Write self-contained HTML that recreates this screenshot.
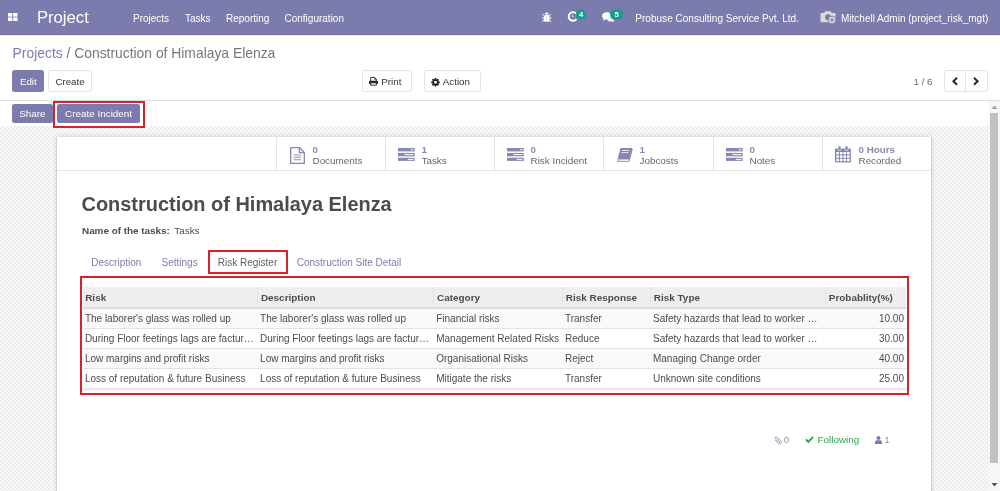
<!DOCTYPE html>
<html><head><meta charset="utf-8">
<style>
*{box-sizing:border-box;margin:0;padding:0}
html{background:#fff}body{will-change:transform;}html,body{-webkit-font-smoothing:antialiased;width:1000px;height:491px;overflow:hidden;background:#fff;font-family:"Liberation Sans",sans-serif;color:#4c4c4c}
.a{position:absolute;white-space:nowrap}
svg.a{overflow:visible}
#nav{position:absolute;left:0;top:0;width:1000px;height:35px;background:#7c7bad;color:#fff;box-shadow:inset 0 -1px 0 #6d6c98,0 1px 0 #ebe9f5}
#nav .a{color:#fff}
.nt{font-size:10px;line-height:12px;top:12.7px}
.btn{position:absolute;border-radius:2.5px;font-size:9.75px;text-align:center;line-height:23px;height:22.3px}
.bp{background:#7c7bad;color:#fff}
.bd{background:#fff;border:1px solid #e3e3e3;color:#333;line-height:21px}
#texture{position:absolute;left:0;top:126px;width:989px;height:365px;background-color:#f8f8f8;
 background-image:linear-gradient(45deg,#ededed 25%,transparent 25%,transparent 75%,#ededed 75%),linear-gradient(45deg,#ededed 25%,transparent 25%,transparent 75%,#ededed 75%);
 background-size:4px 4px;background-position:0 0,2px 2px}
#sheet{position:absolute;left:57px;top:137px;width:874px;height:360px;background:#fff;box-shadow:-1px 0 0 #d2d2d2,1px 0 0 #d2d2d2,0 0 5px rgba(0,0,0,.18)}
.sb{position:absolute;top:137px;height:33.5px;width:109px;border-left:1px solid #e4e4e4}
.sb .n{position:absolute;left:35.5px;top:7.5px;font-size:9.8px;font-weight:bold;color:#8a89b0;line-height:10px}
.sb .l{position:absolute;left:35.5px;top:18.2px;font-size:9.9px;color:#666;line-height:12px}
.sb svg{position:absolute}
table{position:absolute;left:82.5px;top:287px;width:823.5px;border-collapse:collapse;font-size:9.95px;table-layout:fixed}
th{background:#eee;font-weight:bold;text-align:left;height:21px;padding:0 2px 0 2.7px;border-left:1px solid #e2e2e2;border-bottom:2px solid #dcdcdc;color:#4c4c4c}
td{height:20px;padding:0 2px 0 2.4px;font-size:10px;border-top:1px solid #e2e2e2;white-space:nowrap;overflow:hidden;color:#4c4c4c}
tr.odd td{background:#f9f9f9}
.red{position:absolute;border:2px solid #d5232b;z-index:5}
.tab{font-size:10px;line-height:12px;top:256.8px;color:#7c7bad}
.ch{font-size:9.9px;line-height:12px;top:434.4px}
</style></head><body>
<div id="nav">
  <svg class="a" style="left:7.7px;top:13px" width="9.5" height="8" viewBox="0 0 9.5 8"><rect x="0" y="0" width="4.3" height="3.6" fill="#fff"/><rect x="5.2" y="0" width="4.3" height="3.6" fill="#fff"/><rect x="0" y="4.4" width="4.3" height="3.6" fill="#fff"/><rect x="5.2" y="4.4" width="4.3" height="3.6" fill="#fff"/></svg>
  <div class="a" style="left:36.9px;top:8.4px;font-size:16.7px;line-height:20px">Project</div>
  <div class="a nt" style="left:133px">Projects</div>
  <div class="a nt" style="left:185px">Tasks</div>
  <div class="a nt" style="left:226px">Reporting</div>
  <div class="a nt" style="left:284.5px">Configuration</div>
  <!-- bug -->
  <svg class="a" style="left:542.4px;top:11.9px" width="9.5" height="10" viewBox="0 0 9.5 10"><path d="M2.6 2.6 Q2.9 0.4 4.75 0.4 Q6.6 0.4 6.9 2.6 Z" fill="#fff"/><rect x="1.9" y="2.9" width="5.7" height="6.9" rx="1.6" fill="#fff"/><path d="M0.3 2.2 L2.2 3.6 M9.2 2.2 L7.3 3.6 M0 6 H2.2 M9.5 6 H7.3 M0.3 9.6 L2.2 8.2 M9.2 9.6 L7.3 8.2" stroke="#fff" stroke-width="1"/><rect x="4.5" y="3.8" width="0.5" height="5.4" fill="#b9b8d6"/></svg>
  <!-- clock -->
  <svg class="a" style="left:566.8px;top:11.2px" width="10.5" height="10.5" viewBox="0 0 10.5 10.5"><path d="M9.2 2.6 A4.3 4.3 0 1 0 9.4 8.1" fill="none" stroke="#fff" stroke-width="1.9"/><path d="M5.3 3.2 V5.5 H7" fill="none" stroke="#d8d8ea" stroke-width="0.8"/></svg>
  <div class="a" style="left:576px;top:8.6px;width:10.3px;height:11.3px;border-radius:5.5px;background:#1e9b8a;color:#e8fff8 !important;font-size:7.6px;font-weight:bold;line-height:11.3px;text-align:center">4</div>
  <!-- chat -->
  <svg class="a" style="left:601.8px;top:11.5px" width="13" height="10" viewBox="0 0 13 10"><ellipse cx="5" cy="3.9" rx="5" ry="3.6" fill="#fff"/><path d="M1.8 6.3 L0.8 8.6 L4.2 7 Z" fill="#fff"/><ellipse cx="9" cy="7.2" rx="3.6" ry="2.3" fill="#f3f0fa"/><path d="M10.4 9 L12.2 10 L11.3 8.3 Z" fill="#f3f0fa"/></svg>
  <div class="a" style="left:610.3px;top:8.6px;width:12.5px;height:11.6px;border-radius:6px;background:#1e9b8a;color:#e8fff8 !important;font-size:7.6px;font-weight:bold;line-height:11.6px;text-align:center">5</div>
  <div class="a nt" style="left:635.3px;font-size:10.05px">Probuse Consulting Service Pvt. Ltd.</div>
  <!-- camera -->
  <svg class="a" style="left:819.8px;top:11px" width="16.5" height="13" viewBox="0 0 16.5 13"><path d="M0.5 3 Q0.5 2 1.5 2 H4 L5.2 0.3 H10.6 L11.8 2 H14.6 Q15.6 2 15.6 3 V10.5 Q15.6 11.3 14.6 11.3 H1.5 Q0.5 11.3 0.5 10.5 Z" fill="#d9d9de"/><circle cx="8" cy="6.3" r="3" fill="#7d7c9e"/><circle cx="12" cy="9" r="3.9" fill="#d9d9de" stroke="#7c7bad" stroke-width="0.9"/><path d="M12 6.9 V11.1 M9.9 9 H14.1" stroke="#7d7c9e" stroke-width="1.1"/></svg>
  <div class="a nt" style="left:841px">Mitchell Admin (project_risk_mgt)</div>
</div>
<div class="a" style="left:12.6px;top:45px;font-size:13.87px;line-height:16px;color:#777"><span style="color:#7c7bad">Projects</span> / Construction of Himalaya Elenza</div>
<div class="btn bp" style="left:12.2px;top:70.2px;width:32.3px">Edit</div>
<div class="btn bd" style="left:47.7px;top:70.2px;width:44.7px">Create</div>
<div class="btn bd" style="left:361.5px;top:70.2px;width:50px"></div>
<svg class="a" style="left:369px;top:77.2px" width="9" height="8.6" viewBox="0 0 9 8.6"><path d="M1.7 4 V0.45 H5.6 L7.3 2.1 V4" fill="none" stroke="#222" stroke-width="0.9"/><path d="M5.4 0.45 V2.3 H7.3" fill="none" stroke="#222" stroke-width="0.7"/><rect x="0" y="3.7" width="9" height="3.3" rx="0.9" fill="#222"/><rect x="1.7" y="5.8" width="5.6" height="2.35" fill="#fff" stroke="#222" stroke-width="0.9"/></svg>
<div class="a" style="left:381.3px;top:75.5px;font-size:9.75px;line-height:12px;color:#333">Print</div>
<div class="btn bd" style="left:423.5px;top:70.2px;width:57px"></div>
<svg class="a" style="left:431px;top:77.5px" width="9" height="8.6" viewBox="-4.5 -4.3 9 8.6"><g fill="#222"><circle r="3.1"/><rect x="-0.9" y="-4.3" width="1.8" height="8.6" rx="0.3"/><rect x="-0.9" y="-4.3" width="1.8" height="8.6" rx="0.3" transform="rotate(45)"/><rect x="-0.9" y="-4.3" width="1.8" height="8.6" rx="0.3" transform="rotate(90)"/><rect x="-0.9" y="-4.3" width="1.8" height="8.6" rx="0.3" transform="rotate(135)"/></g><circle r="1.5" fill="#fff"/></svg>
<div class="a" style="left:442.8px;top:75.5px;font-size:9.75px;line-height:12px;color:#333">Action</div>
<div class="a" style="left:913.5px;top:75.5px;font-size:9.75px;line-height:12px;color:#666">1 / 6</div>
<div class="btn bd" style="left:943.5px;top:70.2px;width:44px"></div>
<div class="a" style="left:965.2px;top:71px;width:1px;height:21px;background:#e3e3e3"></div>
<svg class="a" style="left:952px;top:77px" width="6" height="8.6" viewBox="0 0 6 8.6"><path d="M5 0.8 L1.4 4.3 L5 7.8" fill="none" stroke="#222" stroke-width="1.9"/></svg>
<svg class="a" style="left:973.3px;top:77px" width="6" height="8.6" viewBox="0 0 6 8.6"><path d="M1 0.8 L4.6 4.3 L1 7.8" fill="none" stroke="#222" stroke-width="1.9"/></svg>
<div class="a" style="left:0;top:100px;width:1000px;height:1px;background:#dedede;z-index:3"></div>
<div class="btn bp" style="left:12.2px;top:104.3px;width:40.5px;height:18.5px;line-height:20px;font-size:9.9px">Share</div>
<div class="btn bp" style="left:57.2px;top:104.3px;width:82.8px;height:18.5px;line-height:20px;font-size:9.9px">Create Incident</div>
<div class="red" style="left:53px;top:101px;width:91.5px;height:27px"></div>
<div id="texture"></div>
<div id="sheet"></div>
<div class="a" style="left:57px;top:170px;width:874px;height:1px;background:#e4e4e4"></div>
<div class="sb" style="left:276px"><svg style="left:12.5px;top:9.5px" width="15" height="17" viewBox="0 0 15 17"><path d="M0.7 0.7 H9.5 L14.3 5.5 V16.3 H0.7 Z" fill="none" stroke="#8786b5" stroke-width="1.3"/><path d="M9.3 0.7 V5.7 H14.3" fill="none" stroke="#8786b5" stroke-width="1.3"/><path d="M3.7 8 H11 M3.7 10.3 H11 M3.7 12.7 H11" stroke="#8786b5" stroke-width="0.9"/></svg><div class="n">0</div><div class="l">Documents</div></div>
<div class="sb" style="left:385px"><svg style="left:11.7px;top:10.6px" width="17" height="13" viewBox="0 0 17 13"><rect x="0" y="0" width="16.7" height="3.4" fill="#8786b5"/><rect x="0" y="4.9" width="16.7" height="3.4" fill="#8786b5"/><rect x="0" y="9.7" width="16.7" height="3.2" fill="#8786b5"/><rect x="12.7" y="1.2" width="2.7" height="1" fill="#fff"/><rect x="6.4" y="6.1" width="9" height="1" fill="#fff"/><rect x="9.8" y="10.8" width="5.6" height="1" fill="#fff"/></svg><div class="n">1</div><div class="l">Tasks</div></div>
<div class="sb" style="left:494px"><svg style="left:12px;top:10.6px" width="17" height="13" viewBox="0 0 17 13"><rect x="0" y="0" width="16.7" height="3.4" fill="#8786b5"/><rect x="0" y="4.9" width="16.7" height="3.4" fill="#8786b5"/><rect x="0" y="9.7" width="16.7" height="3.2" fill="#8786b5"/><rect x="12.7" y="1.2" width="2.7" height="1" fill="#fff"/><rect x="6.4" y="6.1" width="9" height="1" fill="#fff"/><rect x="9.8" y="10.8" width="5.6" height="1" fill="#fff"/></svg><div class="n">0</div><div class="l">Risk Incident</div></div>
<div class="sb" style="left:603px"><svg style="left:13px;top:11px" width="16" height="14" viewBox="0 0 16 14"><path d="M3.5 0 H15.4 L12.5 11.6 H0.6 Z" fill="#8786b5"/><path d="M0.6 11.6 L0.2 12.6 Q0 13.3 0.8 13.3 H12 L15 2 L15.4 1" fill="none" stroke="#8786b5" stroke-width="1"/><path d="M5 2.5 H12 M4.5 4.6 H11.5" stroke="#fff" stroke-width="0.8"/></svg><div class="n">1</div><div class="l">Jobcosts</div></div>
<div class="sb" style="left:713px"><svg style="left:12px;top:10.6px" width="17" height="13" viewBox="0 0 17 13"><rect x="0" y="0" width="16.7" height="3.4" fill="#8786b5"/><rect x="0" y="4.9" width="16.7" height="3.4" fill="#8786b5"/><rect x="0" y="9.7" width="16.7" height="3.2" fill="#8786b5"/><rect x="12.7" y="1.2" width="2.7" height="1" fill="#fff"/><rect x="6.4" y="6.1" width="9" height="1" fill="#fff"/><rect x="9.8" y="10.8" width="5.6" height="1" fill="#fff"/></svg><div class="n">0</div><div class="l">Notes</div></div>
<div class="sb" style="left:822px"><svg style="left:12.1px;top:9.3px" width="16" height="17" viewBox="0 0 16 17"><rect x="0" y="2.5" width="15.9" height="13.9" fill="#8786b5"/><rect x="3" y="0" width="3" height="4.5" rx="1" fill="#8786b5" stroke="#fff" stroke-width="0.6"/><rect x="10" y="0" width="3" height="4.5" rx="1" fill="#8786b5" stroke="#fff" stroke-width="0.6"/><g fill="#fff"><rect x="1.3" y="6" width="2.6" height="2.4"/><rect x="4.9" y="6" width="2.6" height="2.4"/><rect x="8.5" y="6" width="2.6" height="2.4"/><rect x="12" y="6" width="2.6" height="2.4"/><rect x="1.3" y="9.4" width="2.6" height="2.4"/><rect x="4.9" y="9.4" width="2.6" height="2.4"/><rect x="8.5" y="9.4" width="2.6" height="2.4"/><rect x="12" y="9.4" width="2.6" height="2.4"/><rect x="1.3" y="12.8" width="2.6" height="2.4"/><rect x="4.9" y="12.8" width="2.6" height="2.4"/><rect x="8.5" y="12.8" width="2.6" height="2.4"/><rect x="12" y="12.8" width="2.6" height="2.4"/></g></svg><div class="n">0 Hours</div><div class="l">Recorded</div></div>

<div class="a" style="left:81.5px;top:193px;font-size:19.95px;font-weight:bold;line-height:23px;color:#4c4c4c">Construction of Himalaya Elenza</div>
<div class="a" style="left:82px;top:224.5px;font-size:9.9px;line-height:12px;color:#4c4c4c"><b>Name of the tasks:</b><span style="margin-left:4.5px">Tasks</span></div>

<div class="a tab" style="left:91.3px">Description</div>
<div class="a tab" style="left:161.5px">Settings</div>
<div class="a tab" style="left:217.8px;color:#5c5c5c">Risk Register</div>
<div class="a tab" style="left:296.7px">Construction Site Detail</div>
<div class="red" style="left:208.3px;top:250px;width:79.6px;height:24px"></div>

<table>
<colgroup><col style="width:175.2px"><col style="width:176.1px"><col style="width:128.8px"><col style="width:88px"><col style="width:175px"><col style="width:80.4px"></colgroup>
<tr><th style="border-left:none">Risk</th><th>Description</th><th>Category</th><th>Risk Response</th><th>Risk Type</th><th>Probablity(%)</th></tr>
<tr class="odd"><td>The laborer's glass was rolled up</td><td>The laborer's glass was rolled up</td><td>Financial risks</td><td>Transfer</td><td>Safety hazards that lead to worker …</td><td style="text-align:right">10.00</td></tr>
<tr><td>During Floor feetings lags are factur…</td><td>During Floor feetings lags are factur…</td><td>Management Related Risks</td><td>Reduce</td><td>Safety hazards that lead to worker …</td><td style="text-align:right">30.00</td></tr>
<tr class="odd"><td>Low margins and profit risks</td><td>Low margins and profit risks</td><td>Organisational Risks</td><td>Reject</td><td>Managing Change order</td><td style="text-align:right">40.00</td></tr>
<tr><td>Loss of reputation &amp; future Business</td><td>Loss of reputation &amp; future Business</td><td>Mitigate the risks</td><td>Transfer</td><td>Unknown site conditions</td><td style="text-align:right">25.00</td></tr>
<tr><td colspan="6" style="height:3px;background:#eee"></td></tr>
</table>
<div class="red" style="left:80px;top:276px;width:829.3px;height:119px"></div>

<svg class="a" style="left:773.7px;top:435.5px;transform:scaleX(-1)" width="8" height="8.5" viewBox="0 0 8 8.5"><path d="M6.8 4.2 L3.6 7.4 Q2.2 8.6 0.9 7.4 Q-0.1 6 1.2 4.8 L4.9 1.1 Q5.8 0.3 6.7 1.1 Q7.5 2 6.6 2.9 L3.2 6.3 Q2.7 6.8 2.2 6.3 Q1.8 5.8 2.3 5.3 L5.2 2.4" fill="none" stroke="#9a99c2" stroke-width="0.9"/></svg>
<div class="a ch" style="left:783.8px;color:#999">0</div>
<svg class="a" style="left:805px;top:436.3px" width="9" height="7" viewBox="0 0 9 7"><path d="M0.8 3.4 L3.3 5.8 L8.2 0.9" fill="none" stroke="#28a745" stroke-width="1.9"/></svg>
<div class="a ch" style="left:817.5px;color:#28a745">Following</div>
<svg class="a" style="left:875px;top:435.5px" width="7" height="8" viewBox="0 0 7 8"><circle cx="3.5" cy="2" r="2" fill="#7c7bad"/><path d="M0 8 V6.2 Q0 4.2 2 4.2 H5 Q7 4.2 7 6.2 V8 Z" fill="#7c7bad"/></svg>
<div class="a ch" style="left:884.3px;color:#999">1</div>

<div class="a" style="left:989px;top:101px;width:11px;height:390px;background:#f6f6f6"></div>
<div class="a" style="left:990.2px;top:113.2px;width:8px;height:349.5px;background:#c1c1c1"></div>
<svg class="a" style="left:990px;top:104px" width="9" height="6" viewBox="0 0 9 6"><path d="M1.5 5 L4.5 1.5 L7.5 5 Z" fill="#a3a3a3"/></svg>
<svg class="a" style="left:990px;top:482px" width="9" height="6" viewBox="0 0 9 6"><path d="M1.5 1 L4.5 4.5 L7.5 1 Z" fill="#505050"/></svg>
</body></html>
